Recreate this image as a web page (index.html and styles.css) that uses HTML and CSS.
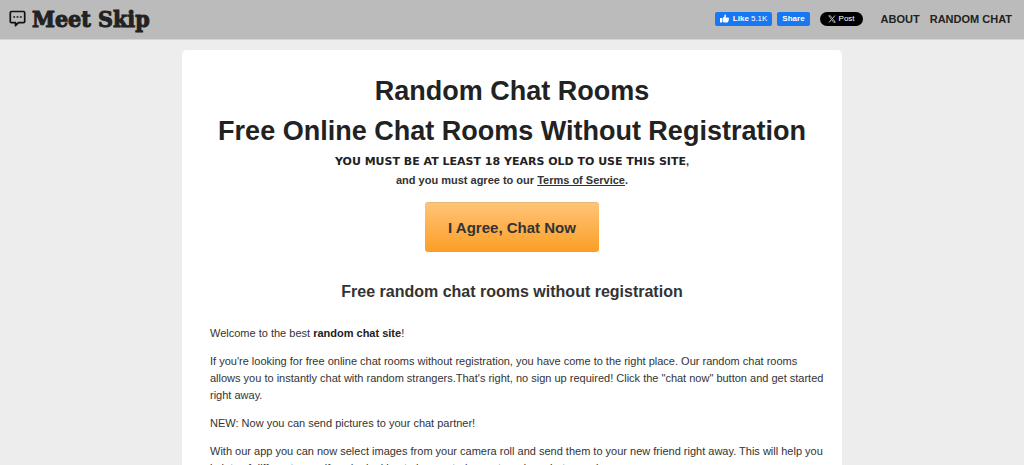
FILE: index.html
```html
<!DOCTYPE html>
<html lang="en">
<head>
  <meta charset="UTF-8">
  <meta name="viewport" content="width=device-width, initial-scale=1.0">
  <title>Meet Skip - Random Chat Rooms</title>
  <link rel="stylesheet" href="styles.css">
</head>
<body>
  <header class="header">
    <a class="logo" href="#">
      <svg class="logo-icon" viewBox="0 0 17 17" fill="none" stroke="#111" stroke-width="1.7" stroke-linejoin="round">
        <path d="M2.500 1.500h12a1.200 1.200 0 0 1 1.200 1.200v8.800a1.200 1.200 0 0 1-1.200 1.200H9.500L6.500 15.700v-3h-4a1.200 1.200 0 0 1-1.200-1.200V2.700a1.200 1.200 0 0 1 1.200-1.200z"/>
        <path d="M4.300 7h1.800M7.600 7h1.800M10.900 7h1.800"/>
      </svg>
      <span>Meet Skip</span>
    </a>
    <div class="social">
      <button class="fb" type="button">
        <svg class="thumb" viewBox="0 0 16 16" fill="#fff"><path d="M0 7h3.500v8H0zM4.500 7.500L8 4V1.200C8 .4 10.600.3 10.600 2.600c0 1.300-.6 2.600-.6 3.400h4.200c2 0 2.200 2 1.200 2.700.8.700.7 1.900-.3 2.400.5.900 0 1.800-.8 2.100.2 1.100-.5 1.800-1.600 1.800H8.500c-2 0-2.500-.8-4-1z"/></svg>
        <b>Like</b> 5.1K
      </button>
      <button class="fb" type="button"><b>Share</b></button>
      <button class="post" type="button">
        <svg class="x-icon" viewBox="0 0 16 16" fill="none" stroke="#fff"><path stroke-width="1.300" d="M1.500 1.500h3.200l9.800 13h-3.200z"/><path stroke-width="1.500" d="M14 1L9 7M6.800 9.300L2 15"/></svg>
        Post
      </button>
    </div>
    <nav class="nav">
      <a href="#">ABOUT</a>
      <a href="#">RANDOM CHAT</a>
    </nav>
  </header>

  <main class="content">
    <h1>Random Chat Rooms<br>Free Online Chat Rooms Without Registration</h1>
    <p class="terms"><strong>YOU MUST BE AT LEAST 18 YEARS OLD TO USE THIS SITE</strong>,<br>and you must agree to our <a href="#">Terms of Service</a>.</p>
    <button class="agree" type="button">I Agree, Chat Now</button>
    <h2>Free random chat rooms without registration</h2>
    <div class="text">
      <p>Welcome to the best <b>random chat site</b>!</p>
      <p>If you're looking for free online chat rooms without registration, you have come to the right place. Our random chat rooms allows you to instantly chat with random strangers.That's right, no sign up required! Click the "chat now" button and get started right away.</p>
      <p>NEW: Now you can send pictures to your chat partner!</p>
      <p>With our app you can now select images from your camera roll and send them to your new friend right away. This will help you in lots of different ways if you're looking to have a truly great random chat experience.</p>
    </div>
  </main>
</body>
</html>
```

FILE: styles.css
```css
* { box-sizing: border-box; }
body {
  margin: 0;
  background: #ededed;
  color: #333;
  font: 11px/17px "Liberation Sans", Arial, sans-serif;
}
.header {
  display: flex;
  align-items: center;
  height: 40px;
  padding: 0 12px 2px 9px;
  background: #bbb;
  border-bottom: 1px solid #d5d5d5;
}
.logo {
  display: flex;
  align-items: center;
  gap: 6px;
  margin-right: auto;
  color: #222;
  font: bold 23px/32px "DejaVu Serif Condensed", "DejaVu Serif", serif;
  -webkit-text-stroke: 1px #222;
  text-decoration: none;
}
.logo-icon { width: 17px; height: 17px; }
.social { display: flex; gap: 5px; }
.social button {
  display: flex;
  align-items: center;
  height: 14px;
  border: 0;
  color: #fff;
  font: 8px/14px "Liberation Sans", Arial, sans-serif;
}
.social .fb {
  gap: 2px;
  padding: 0 5px;
  border-radius: 2px;
  background: #1877f2;
}
.thumb { width: 9px; height: 9px; margin-right: 2px; }
.social .post {
  gap: 3px;
  margin-left: 5px;
  padding: 0 8px;
  border-radius: 7px;
  background: #000;
}
.x-icon { width: 8px; height: 8px; }
.nav {
  display: flex;
  gap: 10px;
  margin-left: 18px;
  padding-top: 2px;
}
.nav a { color: #222; font-weight: bold; text-decoration: none; }

.content {
  max-width: 660px;
  margin: 10px auto 0;
  padding: 21px 28px;
  background: #fff;
  border-radius: 5px;
}
h1, h2, .terms { text-align: center; }
h1 {
  margin: 0;
  color: #222;
  font-size: 27px;
  line-height: 40px;
}
.text { margin-right: -12px; }
.text p { margin: 0 0 11px; }
.text b { color: #222; }
.terms {
  margin: 1px 0 0;
  font-weight: bold;
  line-height: 18px;
}
.terms strong {
  color: #222;
  font-family: "Arial Black", "DejaVu Sans", sans-serif;
}
.terms a { color: #333; }
.agree {
  display: block;
  margin: 13px auto 28px;
  padding: 0 23px;
  height: 50px;
  border: 0;
  border-top: 1px solid #e5b878;
  border-radius: 3px;
  background: linear-gradient(#ffc477, #fb9e25);
  color: #333;
  font: bold 15px/20px "Liberation Sans", Arial, sans-serif;
}
h2 {
  margin: 0 0 21px;
  font-size: 16px;
  line-height: 24px;
}
```
